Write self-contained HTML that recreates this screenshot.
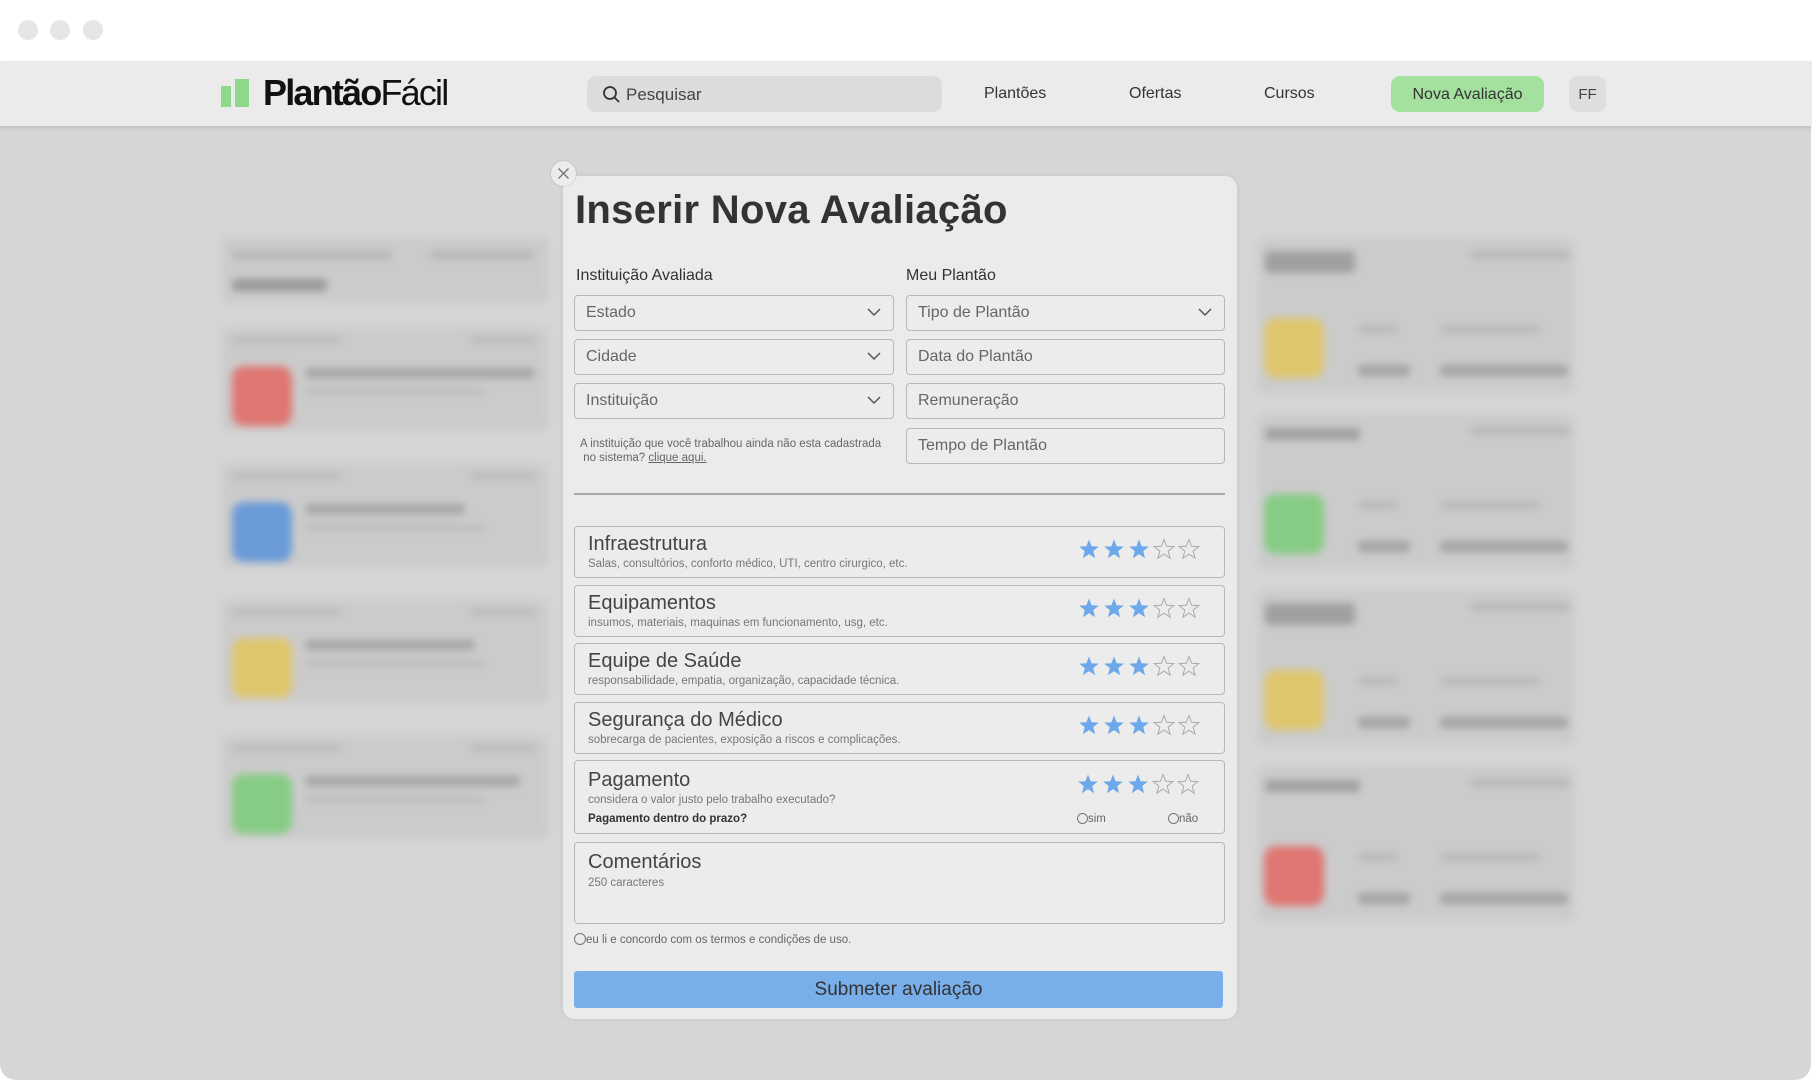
<!DOCTYPE html>
<html><head><meta charset="utf-8"><style>
*{margin:0;padding:0;box-sizing:border-box}
body{width:1812px;height:1080px;background:#fff;position:relative;overflow:hidden;font-family:"Liberation Sans",sans-serif;color:#333}
.a{position:absolute}
.dot{position:absolute;top:20px;width:20px;height:20px;border-radius:50%;background:#e6e6e6}
#win{position:absolute;left:0;top:61px;width:1811px;height:1019px;background:#d6d6d6;border-radius:0 0 16px 16px;overflow:hidden}
.bg{position:absolute;filter:blur(4px)}
.card{position:absolute;background:#cbcbcb;border-radius:6px}
.sq{position:absolute;width:60px;height:60px;border-radius:12px}
.bar{position:absolute;height:10px;background:#a8a8a8;border-radius:4px}
.inp{position:absolute;height:36px;border:1.5px solid #b8b8b8;border-radius:4px;background:#ececec;font-size:16px;color:#666;padding-left:11px;line-height:33px}
.chev{position:absolute;right:12px;top:12px}
.rt{position:absolute;left:574px;width:651px;border:1.5px solid #b8b8b8;border-radius:4px;background:#ececec}
.rt .t{position:absolute;left:13px;top:6px;font-size:20px;color:#444}
.rt .s{position:absolute;left:13px;top:31px;font-size:11.5px;color:#777}
.stars{position:absolute;right:22px;top:11px}
</style></head><body>
<div class="dot" style="left:18px"></div><div class="dot" style="left:50px"></div><div class="dot" style="left:83px"></div>
<div id="win">
 <div class="bg">
  <div class="card" style="left:222px;top:176px;width:326px;height:66px"></div>
  <div class="bar" style="left:232px;top:190px;width:160px;height:8px;background:#b5b5b5"></div>
  <div class="bar" style="left:430px;top:190px;width:105px;height:8px;background:#b5b5b5"></div>
  <div class="bar" style="left:232px;top:218px;width:95px;height:12px;background:#999"></div>
  <div class="card" style="left:222px;top:266px;width:326px;height:104px"></div>
  <div class="card" style="left:222px;top:402px;width:326px;height:104px"></div>
  <div class="card" style="left:222px;top:538px;width:326px;height:104px"></div>
  <div class="card" style="left:222px;top:674px;width:326px;height:104px"></div>
  <div class="sq" style="left:232px;top:305px;background:#df7672"></div>
  <div class="sq" style="left:232px;top:441px;background:#6a9bd8"></div>
  <div class="sq" style="left:232px;top:577px;background:#dfc76e"></div>
  <div class="sq" style="left:232px;top:713px;background:#86cc84"></div>
  <div class="bar" style="left:305px;top:307px;width:230px;background:#a6a6a6"></div>
  <div class="bar" style="left:305px;top:443px;width:160px;background:#a6a6a6"></div>
  <div class="bar" style="left:305px;top:579px;width:170px;background:#a6a6a6"></div>
  <div class="bar" style="left:305px;top:715px;width:215px;background:#a6a6a6"></div>
  <div class="bar" style="left:305px;top:328px;width:180px;height:6px;background:#bbb"></div>
  <div class="bar" style="left:305px;top:464px;width:180px;height:6px;background:#bbb"></div>
  <div class="bar" style="left:305px;top:600px;width:180px;height:6px;background:#bbb"></div>
  <div class="bar" style="left:305px;top:736px;width:180px;height:6px;background:#bbb"></div>
  <div class="bar" style="left:232px;top:276px;width:110px;height:7px;background:#bababa"></div>
  <div class="bar" style="left:232px;top:412px;width:110px;height:7px;background:#bababa"></div>
  <div class="bar" style="left:232px;top:548px;width:110px;height:7px;background:#bababa"></div>
  <div class="bar" style="left:232px;top:684px;width:110px;height:7px;background:#bababa"></div>
  <div class="bar" style="left:470px;top:276px;width:65px;height:7px;background:#bababa"></div>
  <div class="bar" style="left:470px;top:412px;width:65px;height:7px;background:#bababa"></div>
  <div class="bar" style="left:470px;top:548px;width:65px;height:7px;background:#bababa"></div>
  <div class="bar" style="left:470px;top:684px;width:65px;height:7px;background:#bababa"></div>
  <div class="card" style="left:1258px;top:176px;width:316px;height:156px"></div>
  <div class="card" style="left:1258px;top:352px;width:316px;height:156px"></div>
  <div class="card" style="left:1258px;top:528px;width:316px;height:156px"></div>
  <div class="card" style="left:1258px;top:704px;width:316px;height:156px"></div>
  <div class="sq" style="left:1264px;top:257px;background:#dfc76e"></div>
  <div class="sq" style="left:1264px;top:433px;background:#86cc84"></div>
  <div class="sq" style="left:1264px;top:609px;background:#dfc76e"></div>
  <div class="sq" style="left:1264px;top:785px;background:#df7672"></div>
  <div class="bar" style="left:1265px;top:190px;width:90px;height:22px;background:#a0a0a0"></div>
  <div class="bar" style="left:1265px;top:367px;width:95px;height:12px;background:#a0a0a0"></div>
  <div class="bar" style="left:1265px;top:542px;width:90px;height:22px;background:#a0a0a0"></div>
  <div class="bar" style="left:1265px;top:719px;width:95px;height:12px;background:#a0a0a0"></div>
  <div class="bar" style="left:1470px;top:190px;width:100px;height:8px;background:#b8b8b8"></div>
  <div class="bar" style="left:1470px;top:366px;width:100px;height:8px;background:#b8b8b8"></div>
  <div class="bar" style="left:1470px;top:542px;width:100px;height:8px;background:#b8b8b8"></div>
  <div class="bar" style="left:1470px;top:718px;width:100px;height:8px;background:#b8b8b8"></div>
  <div class="bar" style="left:1358px;top:264px;width:40px;height:8px;background:#b8b8b8"></div>
  <div class="bar" style="left:1440px;top:264px;width:100px;height:8px;background:#b8b8b8"></div>
  <div class="bar" style="left:1358px;top:304px;width:52px;height:11px;background:#a4a4a4"></div>
  <div class="bar" style="left:1440px;top:304px;width:128px;height:11px;background:#a4a4a4"></div>
  <div class="bar" style="left:1358px;top:440px;width:40px;height:8px;background:#b8b8b8"></div>
  <div class="bar" style="left:1440px;top:440px;width:100px;height:8px;background:#b8b8b8"></div>
  <div class="bar" style="left:1358px;top:480px;width:52px;height:11px;background:#a4a4a4"></div>
  <div class="bar" style="left:1440px;top:480px;width:128px;height:11px;background:#a4a4a4"></div>
  <div class="bar" style="left:1358px;top:616px;width:40px;height:8px;background:#b8b8b8"></div>
  <div class="bar" style="left:1440px;top:616px;width:100px;height:8px;background:#b8b8b8"></div>
  <div class="bar" style="left:1358px;top:656px;width:52px;height:11px;background:#a4a4a4"></div>
  <div class="bar" style="left:1440px;top:656px;width:128px;height:11px;background:#a4a4a4"></div>
  <div class="bar" style="left:1358px;top:792px;width:40px;height:8px;background:#b8b8b8"></div>
  <div class="bar" style="left:1440px;top:792px;width:100px;height:8px;background:#b8b8b8"></div>
  <div class="bar" style="left:1358px;top:832px;width:52px;height:11px;background:#a4a4a4"></div>
  <div class="bar" style="left:1440px;top:832px;width:128px;height:11px;background:#a4a4a4"></div>
 </div>
</div>
<div class="a" style="left:0;top:61px;width:1812px;height:65px;background:#ebebeb;box-shadow:0 2px 4px rgba(0,0,0,.12)"></div>
<div class="a" style="left:221px;top:86px;width:10px;height:21px;background:#8fd98c"></div>
<div class="a" style="left:235px;top:79px;width:14px;height:28px;background:#8fd98c"></div>
<div class="a" style="left:263px;top:72px;font-size:36px;letter-spacing:-1.8px;color:#111"><span style="font-weight:700">Plantão</span>Fácil</div>
<div class="a" style="left:587px;top:76px;width:355px;height:36px;background:#dcdcdc;border-radius:9px"></div>
<svg class="a" style="left:602px;top:85px" width="20" height="20" viewBox="0 0 20 20"><circle cx="8" cy="8" r="6" fill="none" stroke="#333" stroke-width="1.8"/><path d="M12.5 12.5L17 17" stroke="#333" stroke-width="1.8"/></svg>
<div class="a" style="left:626px;top:85px;font-size:17px;color:#444">Pesquisar</div>
<div class="a" style="left:984px;top:85px;font-size:16px;color:#333">Plantões</div>
<div class="a" style="left:1129px;top:85px;font-size:16px;color:#333">Ofertas</div>
<div class="a" style="left:1264px;top:85px;font-size:16px;color:#333">Cursos</div>
<div class="a" style="left:1391px;top:76px;width:153px;height:36px;background:#a4e09e;border-radius:9px;font-size:16px;line-height:38px;text-align:center;color:#333">Nova Avaliação</div>
<div class="a" style="left:1569px;top:76px;width:37px;height:36px;background:#dedede;border-radius:9px;font-size:15px;line-height:38px;text-align:center;color:#444">FF</div>
<div class="a" style="left:563px;top:176px;width:674px;height:843px;background:#ebebeb;border-radius:12px;box-shadow:0 0 6px rgba(0,0,0,.08)"></div>
<div class="a" style="left:551px;top:161px;width:25px;height:25px;border-radius:50%;background:#ececec;box-shadow:0 0 2px rgba(0,0,0,.2)"></div>
<svg class="a" style="left:557px;top:167px" width="13" height="13"><path d="M1.5 1.5L11.5 11.5M11.5 1.5L1.5 11.5" stroke="#777" stroke-width="1.4"/></svg>
<div class="a" style="left:575px;top:188px;font-size:40px;font-weight:700;color:#333;letter-spacing:0.3px">Inserir Nova Avaliação</div>
<div class="a" style="left:576px;top:267px;font-size:16px;color:#333">Instituição Avaliada</div>
<div class="a" style="left:906px;top:267px;font-size:16px;color:#333">Meu Plantão</div>
<svg width="0" height="0" style="position:absolute"><defs>
<path id="cv" d="M1 1L7 7L13 1" fill="none" stroke="#555" stroke-width="1.5"/>
<path id="st" d="M11 1.5L13.6 8.3L20.8 8.6L15.2 13.1L17.1 20.2L11 16.1L4.9 20.2L6.8 13.1L1.2 8.6L8.4 8.3Z"/>
</defs></svg>
<div class="inp" style="left:574px;top:295px;width:320px">Estado<svg class="chev" width="14" height="9"><use href="#cv"/></svg></div>
<div class="inp" style="left:574px;top:339px;width:320px">Cidade<svg class="chev" width="14" height="9"><use href="#cv"/></svg></div>
<div class="inp" style="left:574px;top:383px;width:320px">Instituição<svg class="chev" width="14" height="9"><use href="#cv"/></svg></div>
<div class="inp" style="left:906px;top:295px;width:319px">Tipo de Plantão<svg class="chev" width="14" height="9"><use href="#cv"/></svg></div>
<div class="inp" style="left:906px;top:339px;width:319px">Data do Plantão</div>
<div class="inp" style="left:906px;top:383px;width:319px">Remuneração</div>
<div class="inp" style="left:906px;top:428px;width:319px">Tempo de Plantão</div>
<div class="a" style="left:580px;top:437px;font-size:11.5px;color:#666;line-height:14px">A instituição que você trabalhou ainda não esta cadastrada<br>&nbsp;no sistema? <u>clique aqui.</u></div>
<div class="a" style="left:574px;top:493px;width:651px;height:2px;background:#aaa"></div>
<div class="rt" style="top:526px;height:52px"><div class="t">Infraestrutura</div><div class="s">Salas, consultórios, conforto médico, UTI, centro cirurgico, etc.</div>
<svg class="stars" width="124" height="23"><g fill="#6ca8ea"><use href="#st"/><use href="#st" x="25"/><use href="#st" x="50"/></g><g fill="none" stroke="#aaa"><use href="#st" x="75"/><use href="#st" x="100"/></g></svg></div>
<div class="rt" style="top:585px;height:52px"><div class="t">Equipamentos</div><div class="s">insumos, materiais, maquinas em funcionamento, usg, etc.</div>
<svg class="stars" width="124" height="23"><g fill="#6ca8ea"><use href="#st"/><use href="#st" x="25"/><use href="#st" x="50"/></g><g fill="none" stroke="#aaa"><use href="#st" x="75"/><use href="#st" x="100"/></g></svg></div>
<div class="rt" style="top:643px;height:52px"><div class="t">Equipe de Saúde</div><div class="s">responsabilidade, empatia, organização, capacidade técnica.</div>
<svg class="stars" width="124" height="23"><g fill="#6ca8ea"><use href="#st"/><use href="#st" x="25"/><use href="#st" x="50"/></g><g fill="none" stroke="#aaa"><use href="#st" x="75"/><use href="#st" x="100"/></g></svg></div>
<div class="rt" style="top:702px;height:52px"><div class="t">Segurança do Médico</div><div class="s">sobrecarga de pacientes, exposição a riscos e complicações.</div>
<svg class="stars" width="124" height="23"><g fill="#6ca8ea"><use href="#st"/><use href="#st" x="25"/><use href="#st" x="50"/></g><g fill="none" stroke="#aaa"><use href="#st" x="75"/><use href="#st" x="100"/></g></svg></div>
<div class="rt" style="top:760px;height:74px"><div class="t" style="top:8px">Pagamento</div><div class="s" style="top:33px">considera o valor justo pelo trabalho executado?</div>
<div class="a" style="left:13px;top:52px;font-size:11.5px;font-weight:700;color:#333">Pagamento dentro do prazo?</div>
<div class="a" style="left:502px;top:52px;font-size:11.5px;color:#666"><span style="display:inline-block;width:11px;height:11px;border:1px solid #777;border-radius:50%;vertical-align:-2px"></span>sim</div>
<div class="a" style="left:593px;top:52px;font-size:11.5px;color:#666"><span style="display:inline-block;width:11px;height:11px;border:1px solid #777;border-radius:50%;vertical-align:-2px"></span>não</div>
<svg class="stars" style="top:12px;right:23px" width="124" height="23"><g fill="#6ca8ea"><use href="#st"/><use href="#st" x="25"/><use href="#st" x="50"/></g><g fill="none" stroke="#aaa"><use href="#st" x="75"/><use href="#st" x="100"/></g></svg></div>
<div class="rt" style="top:842px;height:82px"><div class="t" style="top:8px">Comentários</div><div class="s" style="top:34px">250 caracteres</div></div>
<div class="a" style="left:574px;top:933px;font-size:11.5px;color:#666"><span style="display:inline-block;width:12px;height:12px;border:1px solid #777;border-radius:50%;vertical-align:-2px"></span>eu li e concordo com os termos e condições de uso.</div>
<div class="a" style="left:574px;top:971px;width:649px;height:37px;background:#78aeea;border-radius:3px;font-size:19px;line-height:37px;text-align:center;color:#333">Submeter avaliação</div>
</body></html>
